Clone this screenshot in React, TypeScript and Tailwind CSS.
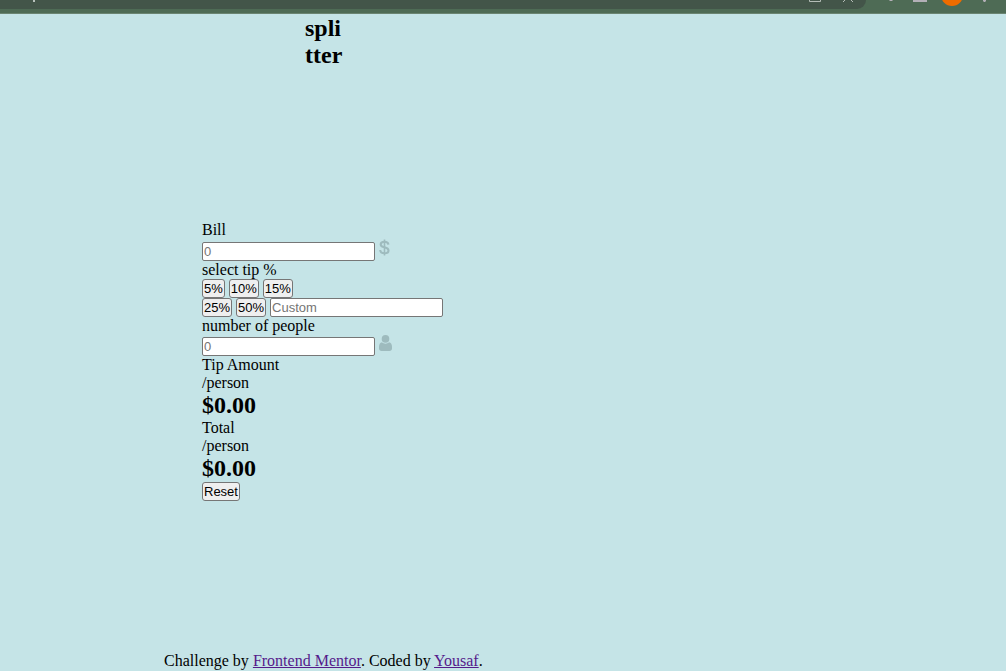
import { useState } from "react";
import type { InputHTMLAttributes, ButtonHTMLAttributes } from "react";

function BrowserEdge() {
  return (
    <div className="flex h-[14px] items-start border-b border-[#6a8471] bg-[#4e6b55]" aria-hidden="true">
      <div className="flex h-[9px] flex-1 items-start justify-between rounded-br-full bg-[#435549] pl-[33px] pr-[10px]">
        <span className="h-[2px] w-[2px] bg-[#b9c3bd]" />
        <svg width="48" height="3" viewBox="0 0 48 3" fill="none" stroke="#b4bdb7">
          <path d="M1.5 0v1.5h11V0M35 2l2-2M45 2l-2-2" />
        </svg>
      </div>
      <svg width="140" height="9" viewBox="0 0 140 9">
        <path d="M23 0h4l-1 1h-2zM47 0h14v2H47zM117 0h3v1l-1 1h-1l-1-1z" fill="#b3b0b7" />
        <circle cx="86" cy="-5" r="11" fill="#ef6c00" />
      </svg>
    </div>
  );
}

function DollarIcon() {
  return (
    <svg className="self-start" width="11" height="17" viewBox="0 0 11 17" fill="none" stroke="#9ebbbe" aria-hidden="true">
      <path d="M5.5 0.5v16" strokeWidth="1.6" />
      <path d="M9.4 5.6C9.2 3.7 7.7 2.8 5.5 2.8S1.7 3.8 1.7 5.4C1.7 7.3 3.3 7.8 5.5 8.3S9.5 9.4 9.5 11.4C9.5 13.2 7.8 14.2 5.5 14.2S1.3 13.1 1.2 11" strokeWidth="2.1" />
    </svg>
  );
}

function PersonIcon() {
  return (
    <svg className="self-start" width="13" height="16" viewBox="0 0 13 16" fill="#9ebbbe" aria-hidden="true">
      <circle cx="6.5" cy="3.9" r="3.8" />
      <path d="M3 7.3C1 7.5 0 9.4 0 12v1.5C0 15 1 16 2.5 16h8c1.500 0 2.500-1 2.500-2.500V12c0-2.600-1-4.500-3-4.700C8.900 8.300 7.800 8.700 6.500 8.700S4.100 8.300 3 7.300z" />
    </svg>
  );
}

function Field(props: InputHTMLAttributes<HTMLInputElement>) {
  return (
    <input
      type="text"
      className="h-[19px] w-[173px] rounded-[2px] border border-[#767676] bg-white px-px font-['Liberation_Sans',sans-serif] text-[13px] leading-4 text-black placeholder:text-[#757575]"
      {...props}
    />
  );
}

function Button(props: ButtonHTMLAttributes<HTMLButtonElement>) {
  return (
    <button
      type="button"
      className="block h-[19px] rounded-[3px] border border-[#767676] bg-[#efefef] px-px font-['Liberation_Sans',sans-serif] text-[13px] leading-4 text-black"
      {...props}
    />
  );
}

function Result({ label, value }: { label: string; value: string }) {
  return (
    <section>
      <p>{label}</p>
      <p>/person</p>
      <h2 className="text-2xl/[27px] font-bold">{value}</h2>
    </section>
  );
}

export default function App() {
  const [bill, setBill] = useState("");
  const [tip, setTip] = useState("");
  const [people, setPeople] = useState("");

  const count = Number(people) || 0;
  const amount = Number(bill) || 0;
  const tipAmount = count > 0 ? (amount * (Number(tip) || 0)) / 100 / count : 0;
  const total = count > 0 ? amount / count + tipAmount : 0;

  const reset = () => {
    setBill("");
    setTip("");
    setPeople("");
  };

  return (
    <div className="min-h-screen bg-[#c5e4e7] font-['Liberation_Serif',serif] text-base/[18px] text-black">
      <BrowserEdge />
      <h1 className="ml-[305px] pt-px text-2xl/[27px] font-bold">
        spli
        <br />
        tter
      </h1>
      <main className="ml-[202px] mt-[152px]">
        <label htmlFor="bill" className="block">Bill</label>
        <div className="flex h-[22px] items-end gap-1">
          <Field id="bill" placeholder="0" value={bill} onChange={(e) => setBill(e.target.value)} />
          <DollarIcon />
        </div>
        <label htmlFor="custom" className="block">select tip %</label>
        <div className="flex gap-1">
          <Button onClick={() => setTip("5")}>5%</Button>
          <Button onClick={() => setTip("10")}>10%</Button>
          <Button onClick={() => setTip("15")}>15%</Button>
        </div>
        <div className="flex gap-1">
          <Button onClick={() => setTip("25")}>25%</Button>
          <Button onClick={() => setTip("50")}>50%</Button>
          <Field id="custom" placeholder="Custom" value={tip} onChange={(e) => setTip(e.target.value)} />
        </div>
        <label htmlFor="people" className="block">number of people</label>
        <div className="flex h-[21px] items-end gap-1">
          <Field id="people" placeholder="0" value={people} onChange={(e) => setPeople(e.target.value)} />
          <PersonIcon />
        </div>
        <Result label="Tip Amount" value={`$${tipAmount.toFixed(2)}`} />
        <Result label="Total" value={`$${total.toFixed(2)}`} />
        <Button onClick={reset}>Reset</Button>
      </main>
      <footer className="ml-[164px] mt-[151px]">
        Challenge by{" "}
        <a href="https://www.frontendmentor.io" className="text-[#551a8b] underline">Frontend Mentor</a>
        . Coded by{" "}
        <a href="#" className="text-[#551a8b] underline">Yousaf</a>.
      </footer>
    </div>
  );
}
